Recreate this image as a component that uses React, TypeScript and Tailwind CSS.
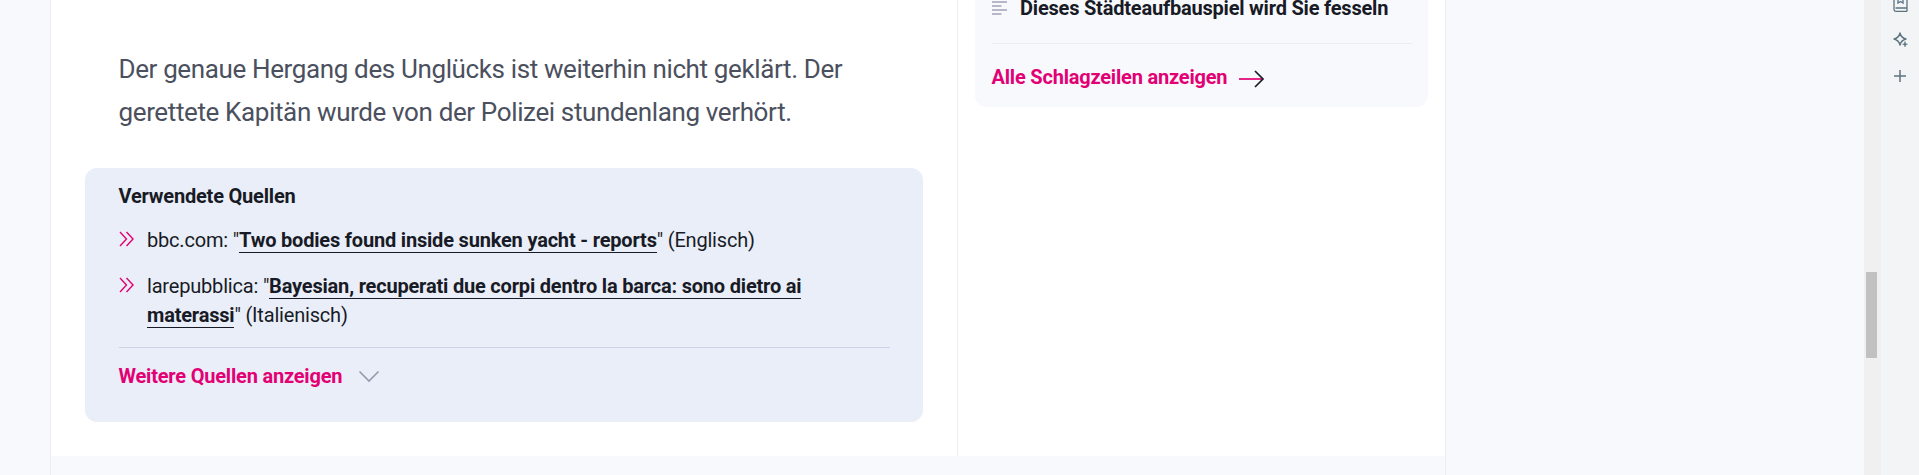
interface Source {
  site: string;
  title: string;
  language: string;
}

const sources: Source[] = [
  { site: "bbc.com", title: "Two bodies found inside sunken yacht - reports", language: "Englisch" },
  { site: "larepubblica", title: "Bayesian, recuperati due corpi dentro la barca: sono dietro ai materassi", language: "Italienisch" },
];

export default function App() {
  return (
    <div className="flex h-[475px] w-full overflow-hidden bg-[#f8f9fd] font-[Roboto,sans-serif] text-[#181b26]">
      <div className="ml-[50px] h-full w-[1396px] shrink-0 border-x border-[#ebedf5]">
        <div className="flex h-[456px] bg-white">
          <Article />
          <Headlines />
        </div>
      </div>
      <div className="grow" />
      <Scrollbar />
      <BrowserSidebar />
    </div>
  );
}

function Article() {
  return (
    <main className="w-[907px] shrink-0 border-r border-[#ebedf5] pl-[34px] pt-[48px]">
      <p className="ml-[33.5px] w-[750px] text-[26px] leading-[43px] tracking-[-0.37px] text-[#4b505e]">
        Der genaue Hergang des Unglücks ist weiterhin nicht geklärt. Der gerettete Kapitän wurde von der Polizei stundenlang verhört.
      </p>

      <section className="mt-[34px] h-[254px] w-[838px] rounded-xl bg-[#eaeef8] pl-[34px] pr-[33px] pt-[14px] text-[20px] tracking-[-0.2px]">
        <h2 className="-ml-[0.5px] font-bold leading-[28px]">Verwendete Quellen</h2>
        <ul className="mt-4 space-y-[17px] leading-[29px] tracking-[-0.19px]">
          {sources.map((s) => (
            <li key={s.site} className="flex">
              <DoubleChevron />
              <p className="w-[690px]">
                {s.site}: "<a className="border-b border-[#181b26] font-bold">{s.title}</a>" ({s.language})
              </p>
            </li>
          ))}
        </ul>
        <button className="mt-[17px] flex w-full border-t border-[#ced2e6] pt-[14px] font-bold leading-[28px] tracking-[-0.2px] text-[#e20074]">
          <span className="-ml-[0.5px]">Weitere Quellen anzeigen</span>
          <svg className="ml-4 mt-[8px]" width="22" height="13" viewBox="0 0 22 13" fill="none" stroke="#969caf" strokeWidth="1.7">
            <path d="M1.5 1.5 11 11l9.5-9.5" />
          </svg>
        </button>
      </section>
    </main>
  );
}

function Headlines() {
  return (
    <aside className="grow pl-[17px]">
      <div className="flex h-[107px] w-[453px] flex-col rounded-b-xl bg-[#f8f9fd] pl-[17px] pr-4 text-[20px] font-bold leading-[28px] tracking-[-0.2px]">
        <div className="-mt-[6px] flex h-[50px] shrink-0 border-b border-[#ebedf2]">
          <svg className="mr-[13px] mt-[6px]" width="15" height="16" viewBox="0 0 15 16" stroke="#b4b8c8" strokeWidth="1.8">
            <path d="M0 2h15M0 6h9.5M0 10h15M0 14h9.5" />
          </svg>
          Dieses Städteaufbauspiel wird Sie fesseln
        </div>
        <a className="-ml-[0.5px] mt-[19px] flex text-[#e20074]">
          Alle Schlagzeilen anzeigen
          <svg className="ml-3 mt-[6px]" width="26" height="20" viewBox="0 0 26 20" fill="none" strokeWidth="1.7">
            <path d="M0 10h24" stroke="#e20074" />
            <path d="m16 2 8 8-8 8" stroke="#181b26" />
          </svg>
        </a>
      </div>
    </aside>
  );
}

function DoubleChevron() {
  return (
    <svg className="mr-[13px] mt-[5px] shrink-0" width="15" height="16" viewBox="0 0 15 16" fill="none" stroke="#e20074" strokeWidth="1.4">
      <path d="m1 1 6.5 7L1 15M7.5 1l6.5 7-6.5 7" />
    </svg>
  );
}

function Scrollbar() {
  return (
    <div className="h-full w-4 shrink-0 bg-[#f0f0f0] pl-[2px] pt-[272px]">
      <div className="h-[86px] w-[11px] bg-[#c1c1c1]" />
    </div>
  );
}

function BrowserSidebar() {
  return (
    <div className="flex h-full w-[39px] shrink-0 flex-col border-l border-[#eef0f2] bg-[#f2f4f6] pl-3">
      <svg width="15" height="12" viewBox="0 0 15 12" fill="none" stroke="#5c7480" strokeWidth="1.3">
        <path d="M1 0v9.5q0 1.8 1.8 1.8H14M14 0v8H2.5M14 8v3.5M5 0v3l2.5-1.5L10 3V0" />
      </svg>
      <svg className="mt-5" width="16" height="16" viewBox="0 0 16 16" fill="none" stroke="#5c7480" strokeWidth="1.4" strokeLinejoin="round">
        <path d="M7 1c.8 3.5 2.2 5.1 6 6-3.8.9-5.2 2.5-6 6-.8-3.5-2.2-5.1-6-6 3.8-.9 5.2-2.5 6-6Z" />
        <path d="M12 9.5c.4 1.8.8 2.3 2.5 2.8-1.7.4-2.1.9-2.5 2.7-.4-1.8-.8-2.3-2.5-2.7 1.7-.5 2.1-1 2.5-2.8Z" fill="#5c7480" strokeWidth=".5" />
      </svg>
      <svg className="ml-px mt-[22px]" width="12" height="12" viewBox="0 0 12 12" stroke="#5c7480" strokeWidth="1.5">
        <path d="M6 0v12M0 6h12" />
      </svg>
    </div>
  );
}
